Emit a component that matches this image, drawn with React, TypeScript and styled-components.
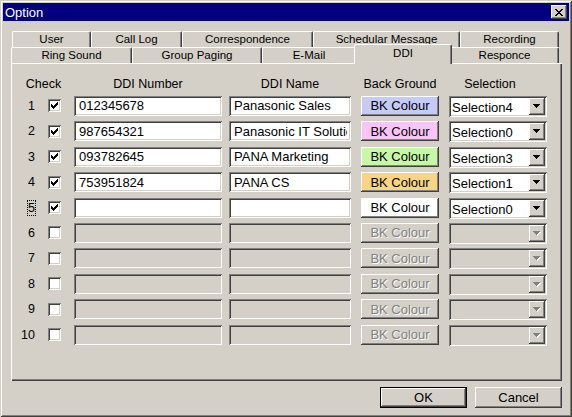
import React from 'react';
import styled, { createGlobalStyle, css } from 'styled-components';

const FACE = '#d4d0c8';
const SHADOW = '#808080';
const DARK = '#404040';

const GlobalStyle = createGlobalStyle`
  html, body {
    margin: 0;
    padding: 0;
    background: ${FACE};
  }
  body {
    font-family: "Liberation Sans", Arial, sans-serif;
    color: #000;
  }
`;

const raised = css`
  box-shadow: inset -1px -1px ${DARK}, inset 1px 1px #fff, inset -2px -2px ${SHADOW};
`;

const sunken = css`
  box-shadow: inset 1px 1px ${SHADOW}, inset -1px -1px #fff, inset 2px 2px ${DARK}, inset -2px -2px ${FACE};
`;

const Window = styled.div`
  width: 572px;
  height: 417px;
  box-sizing: border-box;
  padding: 3px;
  background: ${FACE};
  box-shadow: inset 1px 1px ${FACE}, inset -1px -1px ${DARK}, inset 2px 2px #fff, inset -2px -2px ${SHADOW};
  display: flex;
  flex-direction: column;
`;

const TitleBar = styled.div`
  height: 18px;
  background: #000080;
  color: #fff;
  display: flex;
  align-items: center;
  justify-content: space-between;
  padding: 0 2px;
  font-size: 13px;
`;

const CloseButton = styled.span`
  width: 16px;
  height: 14px;
  background: ${FACE};
  display: flex;
  align-items: center;
  justify-content: center;
  ${raised}
`;

const TabStrip = styled.div`
  margin-top: 10px;
  display: flex;
  flex-direction: column;
`;

const TabRow = styled.div<{ $indent: number }>`
  display: flex;
  align-items: flex-start;
  height: 16px;
  margin-left: ${p => p.$indent}px;
`;

const Tab = styled.div<{ $w: number; $active?: boolean }>`
  box-sizing: border-box;
  width: ${p => p.$w}px;
  height: 16px;
  border-top: 1px solid #fff;
  border-left: 1px solid #fff;
  border-right: 1px solid ${DARK};
  border-radius: 2px 2px 0 0;
  box-shadow: inset -1px 0 ${SHADOW};
  background: ${FACE};
  font-size: 11.5px;
  line-height: 15px;
  text-align: center;
  white-space: nowrap;
  ${p =>
    p.$active &&
    css`
      width: ${p.$w + 4}px;
      height: 20px;
      margin: -3px -2px -1px;
      line-height: 16px;
      position: relative;
      z-index: 1;
    `}
`;

const Panel = styled.div`
  margin-left: 8px;
  width: 551px;
  height: 318px;
  box-sizing: border-box;
  padding: 7.6px 0 0 2px;
  box-shadow: inset 1px 1px #fff, inset -1px -1px ${DARK}, inset -2px -2px ${SHADOW};
`;

const Grid = styled.div`
  display: grid;
  grid-template-columns: 35px 26px 155px 132px 88px 98px;
  grid-auto-rows: 20px;
  row-gap: 5.4px;
  align-items: center;
`;

const HeadCell = styled.div<{ $w?: number; $span?: number }>`
  grid-column: span ${p => p.$span ?? 1};
  width: ${p => (p.$w ? `${p.$w}px` : 'auto')};
  align-self: end;
  font-size: 12.5px;
  line-height: 14px;
  text-align: center;
  white-space: nowrap;
`;

const RowNum = styled.div`
  text-align: right;
  padding-right: 13px;
  font-size: 12.5px;
  line-height: 14px;
`;

const NumText = styled.span<{ $focus?: boolean }>`
  ${p =>
    p.$focus &&
    css`
      outline: 1px dotted #000;
      outline-offset: 0;
    `}
`;

const CheckBox = styled.span`
  width: 13px;
  height: 13px;
  box-sizing: border-box;
  background: #fff;
  display: flex;
  align-items: center;
  justify-content: center;
  ${sunken}
`;

const Field = styled.input<{ $w: number }>`
  width: ${p => p.$w}px;
  height: 20px;
  box-sizing: border-box;
  margin: 0;
  border: none;
  outline: none;
  padding: 2px 4px 2px 5px;
  font-family: "Liberation Sans", Arial, sans-serif;
  font-size: 13px;
  color: #000;
  background: #fff;
  ${sunken}
  &:disabled {
    background: ${FACE};
  }
`;

const ColourButton = styled.button<{ $bg: string }>`
  width: 78px;
  height: 20px;
  margin: 0;
  padding: 0;
  border: none;
  font-family: "Liberation Sans", Arial, sans-serif;
  font-size: 13px;
  color: #000;
  background: ${p => p.$bg};
  ${raised}
  &:disabled {
    color: ${SHADOW};
    text-shadow: 1px 1px #fff;
  }
`;

const Combo = styled.div<{ $disabled?: boolean }>`
  width: 98px;
  height: 21px;
  box-sizing: border-box;
  align-self: start;
  padding: 2px;
  display: flex;
  align-items: center;
  background: ${p => (p.$disabled ? FACE : '#fff')};
  font-size: 13px;
  ${sunken}
`;

const ComboText = styled.span`
  flex: 1;
  padding: 2px 0 0 1px;
  white-space: nowrap;
  overflow: hidden;
`;

const ComboArrow = styled.span`
  width: 16px;
  height: 17px;
  box-sizing: border-box;
  background: ${FACE};
  display: flex;
  align-items: center;
  justify-content: center;
  ${raised}
`;

const Footer = styled.div`
  margin-top: 6px;
  padding-right: 7px;
  display: flex;
  justify-content: flex-end;
  gap: 8px;
`;

const PushButton = styled.button<{ $default?: boolean }>`
  width: 87px;
  height: 21px;
  margin: 0;
  padding: 0;
  border: none;
  background: ${FACE};
  font-family: "Liberation Sans", Arial, sans-serif;
  font-size: 13px;
  color: #000;
  ${raised}
  ${p =>
    p.$default &&
    css`
      box-shadow: inset 0 0 0 1px #000, inset -2px -2px ${DARK}, inset 2px 2px #fff, inset -3px -3px ${SHADOW};
    `}
`;

const CloseGlyph = () => (
  <svg width="8" height="7" viewBox="0 0 8 7" shapeRendering="crispEdges">
    <path
      fill="#000"
      d="M0 0h2v1H0zM6 0h2v1H6zM1 1h2v1H1zM5 1h2v1H5zM2 2h4v1H2zM3 3h2v1H3zM2 4h4v1H2zM1 5h2v1H1zM5 5h2v1H5zM0 6h2v1H0zM6 6h2v1H6z"
    />
  </svg>
);

const CheckMark = () => (
  <svg width="7" height="7" viewBox="0 0 7 7" shapeRendering="crispEdges">
    <path
      fill="#000"
      d="M6 0h1v1H6zM5 1h2v1H5zM0 2h1v1H0zM4 2h3v1H4zM0 3h2v1H0zM3 3h3v1H3zM0 4h5v1H0zM1 5h3v1H1zM2 6h1v1H2z"
    />
  </svg>
);

const DownArrow = ({ disabled }: { disabled?: boolean }) => (
  <svg width="8" height="5" viewBox="0 0 8 5" shapeRendering="crispEdges">
    {disabled && <path fill="#fff" d="M1 1h7v1H1zM2 2h5v1H2zM3 3h3v1H3zM4 4h1v1H4z" />}
    <path fill={disabled ? SHADOW : '#000'} d="M0 0h7v1H0zM1 1h5v1H1zM2 2h3v1H2zM3 3h1v1H3z" />
  </svg>
);

const topTabs: [string, number][] = [
  ['User', 79],
  ['Call Log', 91],
  ['Correspondence', 131],
  ['Schedular Message', 147],
  ['Recording', 99],
];

const frontTabs: [string, number][] = [
  ['Ring Sound', 121],
  ['Group Paging', 130],
  ['E-Mail', 94],
  ['DDI', 94],
  ['Responce', 109],
];

interface DdiRow {
  n: number;
  checked: boolean;
  number: string;
  name: string;
  bg: string;
  sel: string;
  enabled: boolean;
  focus?: boolean;
}

const rows: DdiRow[] = [
  { n: 1, checked: true, number: '012345678', name: 'Panasonic Sales', bg: '#c4cbf7', sel: 'Selection4', enabled: true },
  { n: 2, checked: true, number: '987654321', name: 'Panasonic IT Solutions', bg: '#f9c4f7', sel: 'Selection0', enabled: true },
  { n: 3, checked: true, number: '093782645', name: 'PANA Marketing', bg: '#c6f8a6', sel: 'Selection3', enabled: true },
  { n: 4, checked: true, number: '753951824', name: 'PANA CS', bg: '#f9d482', sel: 'Selection1', enabled: true },
  { n: 5, checked: true, number: '', name: '', bg: '#ffffff', sel: 'Selection0', enabled: true, focus: true },
  ...[6, 7, 8, 9, 10].map(n => ({
    n,
    checked: false,
    number: '',
    name: '',
    bg: FACE,
    sel: '',
    enabled: false,
  })),
];

export default function App() {
  return (
    <>
      <GlobalStyle />
      <Window>
        <TitleBar>
          <span>Option</span>
          <CloseButton>
            <CloseGlyph />
          </CloseButton>
        </TitleBar>

        <TabStrip>
          <TabRow $indent={9}>
            {topTabs.map(([label, w]) => (
              <Tab key={label} $w={w}>
                {label}
              </Tab>
            ))}
          </TabRow>
          <TabRow $indent={8}>
            {frontTabs.map(([label, w]) => (
              <Tab key={label} $w={w} $active={label === 'DDI'}>
                {label}
              </Tab>
            ))}
          </TabRow>
        </TabStrip>

        <Panel>
          <Grid>
            <HeadCell $span={2}>Check</HeadCell>
            <HeadCell $w={148}>DDI Number</HeadCell>
            <HeadCell $w={122}>DDI Name</HeadCell>
            <HeadCell $w={78}>Back Ground</HeadCell>
            <HeadCell $w={82}>Selection</HeadCell>

            {rows.map(r => (
              <React.Fragment key={r.n}>
                <RowNum>
                  <NumText $focus={r.focus}>{r.n}</NumText>
                </RowNum>
                <CheckBox>{r.checked && <CheckMark />}</CheckBox>
                <Field $w={148} value={r.number} disabled={!r.enabled} readOnly />
                <Field $w={122} value={r.name} disabled={!r.enabled} readOnly />
                <ColourButton $bg={r.bg} disabled={!r.enabled}>
                  BK Colour
                </ColourButton>
                <Combo $disabled={!r.enabled}>
                  <ComboText>{r.sel}</ComboText>
                  <ComboArrow>
                    <DownArrow disabled={!r.enabled} />
                  </ComboArrow>
                </Combo>
              </React.Fragment>
            ))}
          </Grid>
        </Panel>

        <Footer>
          <PushButton $default>OK</PushButton>
          <PushButton>Cancel</PushButton>
        </Footer>
      </Window>
    </>
  );
}
